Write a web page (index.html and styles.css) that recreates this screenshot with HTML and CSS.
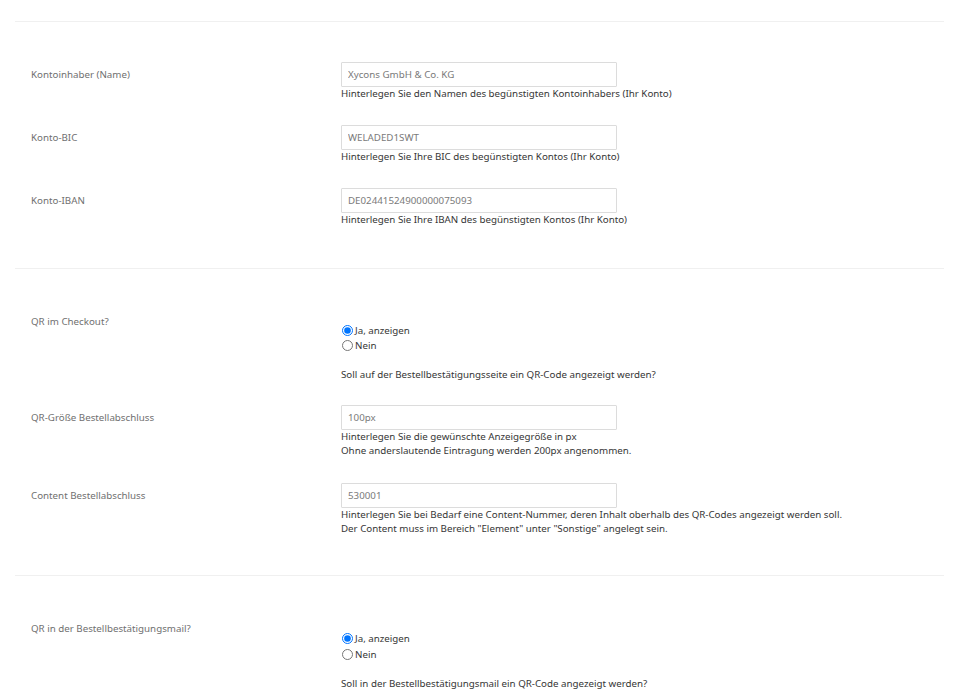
FILE: index.html
```html
<!DOCTYPE html>
<html lang="de">

<head>
    <meta charset="utf-8">
    <meta name="viewport" content="width=device-width, initial-scale=1.0">
    <title>QR-Code Einstellungen</title>
    <link rel="stylesheet" href="styles.css">
</head>

<body>
    <div class="einstellungen">

        <section class="gruppe">
            <div class="zeile">
                <label class="navn" for="inhaber">Kontoinhaber (Name)</label>
                <div class="felt">
                    <input type="text" id="inhaber" value="Xycons GmbH &amp; Co. KG">
                    <p class="hjaelp">Hinterlegen Sie den Namen des begünstigten Kontoinhabers (Ihr Konto)</p>
                </div>
            </div>
            <div class="zeile">
                <label class="navn" for="bic">Konto-BIC</label>
                <div class="felt">
                    <input type="text" id="bic" value="WELADED1SWT">
                    <p class="hjaelp">Hinterlegen Sie Ihre BIC des begünstigten Kontos (Ihr Konto)</p>
                </div>
            </div>
            <div class="zeile">
                <label class="navn" for="iban">Konto-IBAN</label>
                <div class="felt">
                    <input type="text" id="iban" value="DE02441524900000075093">
                    <p class="hjaelp">Hinterlegen Sie Ihre IBAN des begünstigten Kontos (Ihr Konto)</p>
                </div>
            </div>
        </section>

        <section class="gruppe mitte">
            <div class="zeile kurz">
                <span class="navn">QR im Checkout?</span>
                <div class="felt valg">
                    <label class="radio"><input type="radio" name="checkout" checked> Ja, anzeigen</label>
                    <label class="radio"><input type="radio" name="checkout"> Nein</label>
                    <p class="hjaelp afstand">Soll auf der Bestellbestätigungsseite ein QR-Code angezeigt werden?</p>
                </div>
            </div>
            <div class="zeile lang">
                <label class="navn" for="groesse">QR-Größe Bestellabschluss</label>
                <div class="felt">
                    <input type="text" id="groesse" value="100px">
                    <p class="hjaelp">Hinterlegen Sie die gewünschte Anzeigegröße in px<br>
                        Ohne anderslautende Eintragung werden 200px angenommen.</p>
                </div>
            </div>
            <div class="zeile">
                <label class="navn" for="content">Content Bestellabschluss</label>
                <div class="felt">
                    <input type="text" id="content" value="530001">
                    <p class="hjaelp">Hinterlegen Sie bei Bedarf eine Content-Nummer, deren Inhalt oberhalb des QR-Codes angezeigt werden soll.<br>
                        Der Content muss im Bereich "Element" unter "Sonstige" angelegt sein.</p>
                </div>
            </div>
        </section>

        <section class="gruppe">
            <div class="zeile">
                <span class="navn">QR in der Bestellbestätigungsmail?</span>
                <div class="felt valg weit">
                    <label class="radio"><input type="radio" name="mail" checked> Ja, anzeigen</label>
                    <label class="radio"><input type="radio" name="mail"> Nein</label>
                    <p class="hjaelp afstand">Soll in der Bestellbestätigungsmail ein QR-Code angezeigt werden?</p>
                </div>
            </div>
        </section>

    </div>
</body>

</html>
```

FILE: styles.css
```css
body {
    margin: 0;
    background-color: #fff;
    font-family: "Noto Sans", "Open Sans", sans-serif;
    font-size: 9.75px;
    color: #363636;
}

.einstellungen {
    padding: 21px 34px 0 15px;
}

.gruppe {
    border-top: 1px solid #f0f0f0;
    padding: 40px 0 17px;
}

.mitte {
    padding-bottom: 15px;
}

.zeile {
    display: grid;
    grid-template-columns: 326px 1fr;
    margin-bottom: 24px;
}

.kurz {
    margin-bottom: 23px;
}

.lang {
    margin-bottom: 25px;
}

.navn {
    padding: 6px 0 0 16px;
    line-height: 14px;
    color: #707070;
}

.felt input[type="text"] {
    display: block;
    box-sizing: border-box;
    width: 276px;
    height: 25px;
    margin: 0;
    padding: 0 6px;
    border: 1px solid #dcdcdc;
    border-radius: 1px;
    font-family: inherit;
    font-size: 9.75px;
    color: #7a7a7a;
}

.hjaelp {
    margin: 0;
    line-height: 14px;
    color: #363636;
}

.valg {
    padding-top: 14px;
}

.radio {
    display: flex;
    align-items: center;
    height: 15px;
    color: #363636;
}

.weit .radio {
    height: 16px;
}

.radio input {
    width: 11px;
    height: 11px;
    margin: 0 2px 0 1px;
}

.afstand {
    margin-top: 15px;
}
```
